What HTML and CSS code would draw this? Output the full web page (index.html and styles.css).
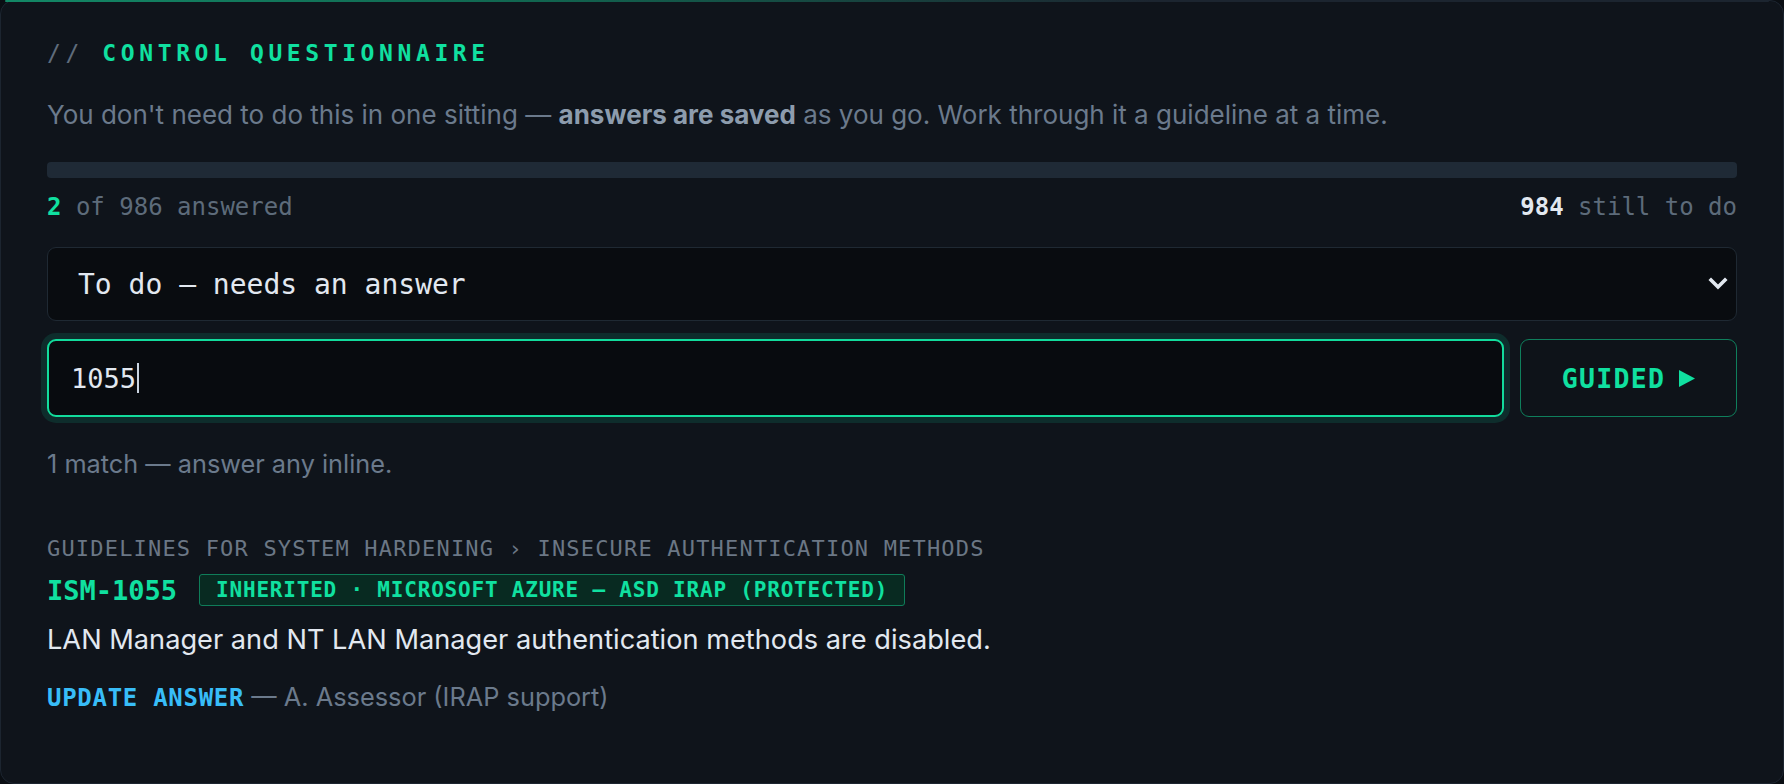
FILE: index.html
```html
<!DOCTYPE html>
<html lang="en">
<head>
<meta charset="utf-8">
<title>Control questionnaire</title>
<link rel="stylesheet" href="styles.css">
</head>
<body>
<section class="card">
  <h2 class="title"><span class="slashes">//</span> CONTROL QUESTIONNAIRE</h2>
  <p class="lede">You don't need to do this in one sitting — <strong>answers are saved</strong> as you go. Work through it a guideline at a time.</p>
  <div class="track"></div>
  <div class="stats">
    <span><b class="done">2</b> of 986 answered</span>
    <span><b class="left">984</b> still to do</span>
  </div>
  <div class="select">
    <span class="select-text">To do — needs an answer</span>
    <svg class="chev" width="20" height="14" viewBox="0 0 20 14"><polyline points="3,3 10,10 17,3" fill="none" stroke="#e2e8f0" stroke-width="3.6" stroke-linecap="square" stroke-linejoin="miter"/></svg>
  </div>
  <div class="search-row">
    <div class="search"><span class="search-text">1055</span><span class="caret"></span></div>
    <button class="guided">GUIDED <svg class="tri" width="16" height="17" viewBox="0 0 16 17"><polygon points="0,0 16,8.5 0,17" fill="#10e0a0"/></svg></button>
  </div>
  <p class="match">1 match — answer any inline.</p>
  <div class="crumb">GUIDELINES FOR SYSTEM HARDENING › INSECURE AUTHENTICATION METHODS</div>
  <div class="ctrl-row">
    <span class="ctrl-id">ISM-1055</span>
    <span class="badge">INHERITED · MICROSOFT AZURE — ASD IRAP (PROTECTED)</span>
  </div>
  <p class="desc">LAN Manager and NT LAN Manager authentication methods are disabled.</p>
  <p class="update"><span class="update-link">UPDATE ANSWER</span> — A. Assessor (IRAP support)</p>
</section>
</body>
</html>
```
FILE: styles.css
```css
html, body {
  margin: 0;
  padding: 0;
  background: #0a0e13;
}
.card {
  position: relative;
  box-sizing: border-box;
  width: 1784px;
  height: 784px;
  background: #0f141b;
  border: 1px solid #1c2530;
  border-radius: 14px;
  padding: 37px 46px 0 46px;
  display: flex;
  flex-direction: column;
  font-family: Inter, "Noto Sans", sans-serif;
}
.card::before {
  content: "";
  position: absolute;
  top: -1px;
  left: 4px;
  right: 14px;
  height: 2px;
  border-radius: 2px;
  background: linear-gradient(90deg, #138866 0%, #116650 30%, #1c2530 65%);
}
.title {
  margin: 0;
  font-family: "DejaVu Sans Mono", monospace;
  font-size: 23px;
  line-height: 30px;
  font-weight: bold;
  letter-spacing: 0.2em;
  color: #10e0a0;
}
.slashes {
  color: #5f6c7b;
  font-weight: normal;
}
.lede {
  margin: 29px 0 0 0;
  font-size: 26px;
  line-height: 36px;
  color: #6b7a8c;
}
.lede strong {
  color: #8d9cad;
  font-weight: 700;
}
.track {
  margin-top: 29px;
  height: 16px;
  border-radius: 4px;
  background: #1f2a36;
}
.stats {
  margin-top: 14px;
  display: flex;
  justify-content: space-between;
  font-family: "DejaVu Sans Mono", monospace;
  font-size: 24px;
  line-height: 30px;
  color: #5d6b7a;
}
.done { color: #10e0a0; }
.left { color: #e2e8f0; }
.select {
  margin-top: 25px;
  height: 74px;
  box-sizing: border-box;
  border: 1px solid #1f2933;
  border-radius: 9px;
  background: #090c10;
  display: flex;
  align-items: center;
  justify-content: space-between;
  padding: 0 8px 0 30px;
}
.select-text {
  font-family: "DejaVu Sans Mono", monospace;
  font-size: 28px;
  color: #e2e8f0;
}
.chev { display: block; }
.search-row {
  margin-top: 18px;
  display: flex;
  gap: 16px;
  height: 78px;
}
.search {
  flex: 1;
  box-sizing: border-box;
  border: 2px solid #12dc9c;
  border-radius: 9px;
  background: #080b0f;
  box-shadow: 0 0 0 6px rgba(16, 200, 150, 0.14);
  display: flex;
  align-items: center;
  padding-left: 22px;
}
.search-text {
  font-family: "DejaVu Sans Mono", monospace;
  font-size: 27px;
  color: #e2e8f0;
}
.caret {
  display: inline-block;
  width: 2px;
  height: 30px;
  margin-left: 1px;
  background: #cbd5e1;
}
.guided {
  width: 217px;
  box-sizing: border-box;
  border: 1.5px solid #0f7f5c;
  border-radius: 9px;
  background: #0e1319;
  color: #10e0a0;
  font-family: "DejaVu Sans Mono", monospace;
  font-size: 26.5px;
  font-weight: bold;
  letter-spacing: 0.05em;
  display: flex;
  align-items: center;
  justify-content: center;
  gap: 14px;
  padding: 0;
}
.tri { display: block; }
.match {
  margin: 30px 0 0 0;
  font-size: 25.3px;
  line-height: 34px;
  color: #6b7a8c;
}
.crumb {
  margin-top: 54px;
  font-family: "DejaVu Sans Mono", monospace;
  font-size: 22px;
  line-height: 28px;
  letter-spacing: 1.18px;
  color: #6b7785;
}
.ctrl-row {
  margin-top: 11px;
  display: flex;
  align-items: center;
  gap: 22px;
  height: 32px;
}
.ctrl-id {
  font-family: "DejaVu Sans Mono", monospace;
  font-size: 27px;
  font-weight: bold;
  color: #10e0a0;
}
.badge {
  box-sizing: border-box;
  height: 32px;
  display: flex;
  align-items: center;
  padding: 0 16px;
  border: 1.5px solid #0f7d59;
  border-radius: 3px;
  background: #082a21;
  color: #10e0a0;
  font-family: "DejaVu Sans Mono", monospace;
  font-size: 21px;
  font-weight: bold;
  letter-spacing: 0.8px;
}
.desc {
  margin: 16px 0 0 0;
  font-size: 27.2px;
  line-height: 36px;
  color: #e2e8f0;
}
.update {
  margin: 22px 0 0 0;
  font-size: 25.35px;
  line-height: 34px;
  color: #6b7a8c;
}
.update-link {
  font-family: "DejaVu Sans Mono", monospace;
  font-size: 24px;
  font-weight: bold;
  letter-spacing: 0.03em;
  color: #38bdf8;
}
```
